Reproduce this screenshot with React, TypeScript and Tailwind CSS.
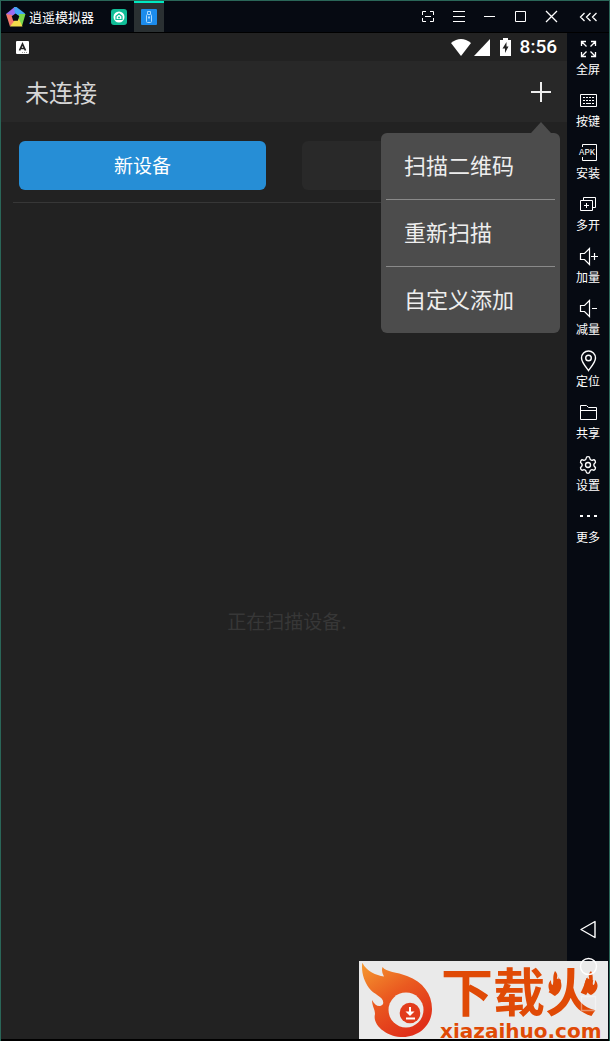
import { useState, type ReactNode } from "react";
import { Settings } from "lucide-react";

type Tool = {
  label: string;
  icon: ReactNode;
};

const tools: Tool[] = [
  {
    label: "全屏",
    icon: (
      <ToolIcon>
        <path
          strokeWidth="1.3"
          d="M8.5 7.5l-5-5M3.5 7V2.5H8M12.5 7.5l5-5M13 2.5h4.5V7M8.5 12.5l-5 5M3.5 13v4.5H8M12.5 12.5l5 5M13 17.5h4.5V13"
        />
      </ToolIcon>
    ),
  },
  {
    label: "按键",
    icon: (
      <ToolIcon>
        <path d="M2.5 3.5h16v12h-16z" />
        <path d="M5 6.5h11M5 9.5h11" strokeDasharray="2 1" />
        <path d="M5 12.5h2M8 12.5h5M14 12.5h2" />
      </ToolIcon>
    ),
  },
  {
    label: "安装",
    icon: (
      <ToolIcon>
        <path d="M4.5 4V1.5h14v16h-14V14" />
        <text
          x="1"
          y="12"
          fill="currentColor"
          stroke="none"
          className="font-['Liberation_Mono',monospace] text-[9px]"
        >
          APK
        </text>
      </ToolIcon>
    ),
  },
  {
    label: "多开",
    icon: (
      <ToolIcon>
        <path d="M2.5 5.5h12v10h-12zM5.5 5V2.5h12v10H15M8.5 8v5M6 10.5h5" />
      </ToolIcon>
    ),
  },
  {
    label: "加量",
    icon: (
      <ToolIcon>
        <path d="M2.5 6.5h4l5-5v16l-5-5h-4zM13 9.5h7M16.5 6v7" strokeWidth="1.2" />
      </ToolIcon>
    ),
  },
  {
    label: "减量",
    icon: (
      <ToolIcon>
        <path d="M2.5 6.5h4l5-5v16l-5-5h-4zM14 9.5h5" strokeWidth="1.2" />
      </ToolIcon>
    ),
  },
  {
    label: "定位",
    icon: (
      <ToolIcon>
        <path
          strokeWidth="1.4"
          d="M10.5 19.5C7 15 3.5 11 3.5 7a7 7 0 0 1 14 0c0 4-3.5 8-7 12.5z"
        />
        <circle cx="10.5" cy="7" r="2.8" strokeWidth="1.4" />
      </ToolIcon>
    ),
  },
  {
    label: "共享",
    icon: (
      <ToolIcon>
        <path d="M2.5 16.5v-14h6l2 2h8v12zM2.5 7.5h16" />
      </ToolIcon>
    ),
  },
  {
    label: "设置",
    icon: <Settings className="size-5" strokeWidth={1.6} />,
  },
  {
    label: "更多",
    icon: (
      <ToolIcon>
        <path d="M2 9h3M9 9h3M16 9h3" strokeWidth="2" />
      </ToolIcon>
    ),
  },
];

const menuItems = ["扫描二维码", "重新扫描", "自定义添加"];

export default function App() {
  return (
    <div className="relative flex min-h-screen flex-col border-x border-t border-[#2a6658] bg-[#060a12] font-['Noto_Sans_CJK_SC',sans-serif] text-white">
      <TitleBar />
      <div className="flex flex-1">
        <Phone />
        <Sidebar />
      </div>
      <div className="h-0.5 bg-black" />
      <Watermark />
    </div>
  );
}

function TitleBar() {
  return (
    <header className="flex h-8 border-b border-black">
      <div className="flex items-center gap-[3px] pl-[3px]">
        <EmulatorLogo />
        <h1 className="text-[13px] leading-5">逍遥模拟器</h1>
      </div>
      <nav className="ml-[10px] flex">
        <button aria-label="主页" className="flex w-[30px] items-center justify-center">
          <svg viewBox="0 0 16 16" className="size-4">
            <rect width="16" height="16" rx="3" fill="#10bd97" />
            <circle cx="8" cy="8" r="5.5" fill="#fff" />
            <path
              d="M8 4.8l3 2.4v3.3H5V7.2z"
              fill="none"
              stroke="#10bd97"
              strokeWidth="1.2"
              strokeLinejoin="round"
            />
            <circle cx="8" cy="8.5" r="1" fill="#10bd97" />
          </svg>
        </button>
        <button
          aria-label="遥控器"
          className="flex w-[30px] items-center justify-center border-y-2 border-t-[#00e8c0] border-b-[#2a3032] bg-[#2a3032]"
        >
          <svg viewBox="0 0 16 16" className="size-4">
            <rect width="16" height="16" rx="1" fill="#1c8cec" />
            <g fill="none" stroke="#a9d8ff">
              <path d="M6.5 5V2.5h3V5" />
              <rect x="5.5" y="5.5" width="5" height="8" rx="1" />
              <path d="M8 7v3M7 8.5h2" />
            </g>
          </svg>
        </button>
      </nav>
      <div className="ml-auto flex">
        <WindowButton label="截图">
          <path d="M2.5 6V2.5H6M10 2.5h3.5V6M13.5 9v3.5H10M6 12.5H2.5V9M5 7.5h6" />
        </WindowButton>
        <WindowButton label="菜单">
          <path d="M2 2.5h12M2 7.5h12M2 12.5h12" />
        </WindowButton>
        <WindowButton label="最小化">
          <path d="M2 7.5h11" />
        </WindowButton>
        <WindowButton label="最大化">
          <path d="M2.5 2.5h10v10h-10z" />
        </WindowButton>
        <WindowButton label="关闭">
          <path d="M2 2l11 11M13 2L2 13" strokeWidth="1.3" />
        </WindowButton>
      </div>
      <button aria-label="收起" className="flex w-[42px] items-center justify-center">
        <svg
          viewBox="0 0 18 10"
          className="h-2.5 w-[18px]"
          fill="none"
          stroke="#fff"
          strokeWidth="1.3"
        >
          <path d="M5.5 1l-4 4 4 4M11.5 1l-4 4 4 4M17.5 1l-4 4 4 4" />
        </svg>
      </button>
    </header>
  );
}

function WindowButton({ label, children }: { label: string; children: ReactNode }) {
  return (
    <button aria-label={label} className="flex w-[31px] items-center justify-center">
      <svg viewBox="0 0 15 15" className="size-[15px]" fill="none" stroke="#fff">
        {children}
      </svg>
    </button>
  );
}

function Phone() {
  return (
    <main className="flex min-w-0 flex-1 flex-col bg-[#222222]">
      <StatusBar />
      <AppHeader />
      <div className="flex gap-9 px-[18px] pt-[19px] pb-3">
        <button className="h-[49px] flex-1 rounded-md bg-[#268ed6] text-[19px]">新设备</button>
        <button aria-label="历史设备" className="h-[49px] flex-1 rounded-md bg-[#292929]" />
      </div>
      <hr className="mx-3 border-[#373737]" />
      <p className="flex flex-1 items-center justify-center pl-1.5 text-[19px] text-[#373737]">
        正在扫描设备.
      </p>
    </main>
  );
}

function StatusBar() {
  return (
    <div className="flex h-7 items-center pr-[10px] pl-[15px]">
      <svg viewBox="0 0 13 13" className="size-[13px]">
        <rect width="13" height="13" rx="1" fill="#fff" />
        <path d="M3.5 9.5L6.5 3l3 6.5M4.5 7.5h4" fill="none" stroke="#222" strokeWidth="1.7" />
        <path d="M6 11.5h6" stroke="#999" strokeDasharray="1 1" />
      </svg>
      <div className="ml-auto flex items-center">
        <svg viewBox="0 0 20 17" className="h-[17px] w-5" fill="#fff">
          <path d="M0 4Q10-4 20 4L10 17z" />
        </svg>
        <svg viewBox="0 0 16 17" className="ml-[3px] h-[17px] w-4" fill="#fff">
          <path d="M16 0v17H0z" />
        </svg>
        <svg viewBox="0 0 11 18" className="ml-[10px] h-[18px] w-[11px]">
          <path d="M3 0h5v2h3v16H0V2h3z" fill="#fff" />
          <path d="M6.5 4L2.5 10.5H5V15l3.5-6.5H6.5z" fill="#222" />
        </svg>
        <time className="ml-[9px] font-['Roboto',sans-serif] text-[19px] leading-7 font-medium">
          8:56
        </time>
      </div>
    </div>
  );
}

function AppHeader() {
  const [open, setOpen] = useState(true);

  return (
    <div className="relative flex h-[61px] items-center justify-between bg-[#282828] pr-[15px] pl-6">
      <h2 className="text-2xl text-[#d6d6d6]">未连接</h2>
      <button
        aria-label="添加"
        aria-haspopup="menu"
        aria-expanded={open}
        onClick={() => setOpen(!open)}
      >
        <svg viewBox="0 0 22 22" className="size-[22px]" stroke="#eee" strokeWidth="2">
          <path d="M1 11h20M11 1v20" />
        </svg>
      </button>
      {open && (
        <div className="absolute top-full right-[7px] z-10 flex w-[179px] flex-col">
          <svg viewBox="0 0 20 11" className="mr-[9px] h-[11px] w-5 self-end" fill="#4c4c4c">
            <path d="M0 11L10 0l10 11z" />
          </svg>
          <ul role="menu" className="divide-y divide-[#8a8a8a] rounded-md bg-[#4c4c4c] px-[5px]">
            {menuItems.map((item) => (
              <li key={item} role="none">
                <button
                  role="menuitem"
                  className="h-[66px] w-full pb-1 pl-[18px] text-left text-[22px] text-[#eeeeee]"
                >
                  {item}
                </button>
              </li>
            ))}
          </ul>
        </div>
      )}
    </div>
  );
}

function Sidebar() {
  return (
    <aside className="flex w-[42px] flex-col justify-between">
      <div className="flex flex-col">
        {tools.map((tool) => (
          <button key={tool.label} className="flex h-[52px] flex-col items-center gap-0.5 pt-1.5">
            {tool.icon}
            <span className="text-xs">{tool.label}</span>
          </button>
        ))}
      </div>
      <div className="z-20 flex flex-col pb-[17px]">
        <NavButton label="返回">
          <path d="M2 9.5l14-8v16z" />
        </NavButton>
        <NavButton label="主屏幕">
          <circle cx="9.5" cy="9.5" r="8" />
        </NavButton>
        <NavButton label="最近任务">
          <path d="M2.5 2.5h14v14h-14z" opacity="0.4" />
        </NavButton>
      </div>
    </aside>
  );
}

function NavButton({ label, children }: { label: string; children: ReactNode }) {
  return (
    <button aria-label={label} className="flex h-[37px] items-center justify-center">
      <svg
        viewBox="0 0 19 19"
        className="size-[19px]"
        fill="none"
        stroke="#fff"
        strokeWidth="1.4"
        strokeLinejoin="round"
      >
        {children}
      </svg>
    </button>
  );
}

function ToolIcon({ children }: { children: ReactNode }) {
  return (
    <svg
      viewBox="0 0 20 20"
      className="size-5 overflow-visible"
      fill="none"
      stroke="currentColor"
      aria-hidden="true"
    >
      {children}
    </svg>
  );
}

function EmulatorLogo() {
  return (
    <svg viewBox="0 0 22 22" className="size-[22px]" aria-hidden="true">
      <path d="M10.5 1L2 8l6 5 4-6z" fill="#9b6cf0" />
      <path d="M10 1h2.5L21 7.5 19.5 12 11 8z" fill="#45a5f5" />
      <path d="M21.5 8L18 20l-5-5 2-7z" fill="#7ad84c" />
      <path d="M18.5 20.5H6L9 13h6z" fill="#f2dc4c" />
      <path d="M6 20.5L2 8l6 1 3 5z" fill="#f4786c" />
      <path d="M11.5 7.5l3.8 2.8-1.5 4.5H9.2l-1.5-4.5z" fill="#060a12" />
    </svg>
  );
}

function Watermark() {
  return (
    <div className="absolute right-px bottom-0.5 flex h-[78px] w-[249px] bg-[#eaeaea] text-[#e04a06]">
      <svg viewBox="0 0 74 78" className="h-[78px] w-[74px] shrink-0" aria-hidden="true">
        <defs>
          <linearGradient id="flame" x1="0" y1="0" x2="0.6" y2="1">
            <stop offset="0" stopColor="#f59a30" />
            <stop offset="0.5" stopColor="#ea5a20" />
            <stop offset="1" stopColor="#e0301a" />
          </linearGradient>
        </defs>
        <path
          fill="url(#flame)"
          d="M3.3 1.7C8 11 17 14 25 15.5Q22 11 23.5 6C27 11 38 11 48 15C64 21 73 33 73 48C73 64 60 76 44 76C28 76 13 64 16 53C16 48 13 45 13 39C16 45 21 47 24 43C26 36 15 34 10 27C5 20 2 11 3.3 1.7z"
        />
        <circle cx="47" cy="49" r="17.5" fill="#eaeaea" />
        <circle cx="51" cy="52" r="10.3" fill="#e23c1c" />
        <path d="M51 46v6M47 57.5h9" stroke="#fff" strokeWidth="2" />
        <path d="M46.5 50.5h9L51 55z" fill="#fff" />
      </svg>
      <div className="relative flex flex-col">
        <strong className="pt-1 pl-2 text-[52px] leading-[50px] font-bold">下载火</strong>
        <span className="pt-2 pl-[7px] font-['DejaVu_Sans',sans-serif] text-xl leading-4 font-bold">
          xiazaihuo.com
        </span>
        <svg
          viewBox="0 0 50 26"
          className="absolute top-2.5 right-1 h-[26px] w-[50px]"
          fill="currentColor"
          aria-hidden="true"
        >
          <path d="M7 0c5 5 0 8 2 12 2-1 2-4 1-6 5 5 5 14-3 19C1 22-2 14 3 9c0 4 1 5 2 5 1-5-1-8 2-14z" />
          <path d="M43 0c-5 5 0 8-2 12-2-1-2-4-1-6-5 5-5 14 3 18 6-3 9-10 4-15 0 4-1 5-2 5-1-5 1-8-2-14z" />
        </svg>
      </div>
    </div>
  );
}
